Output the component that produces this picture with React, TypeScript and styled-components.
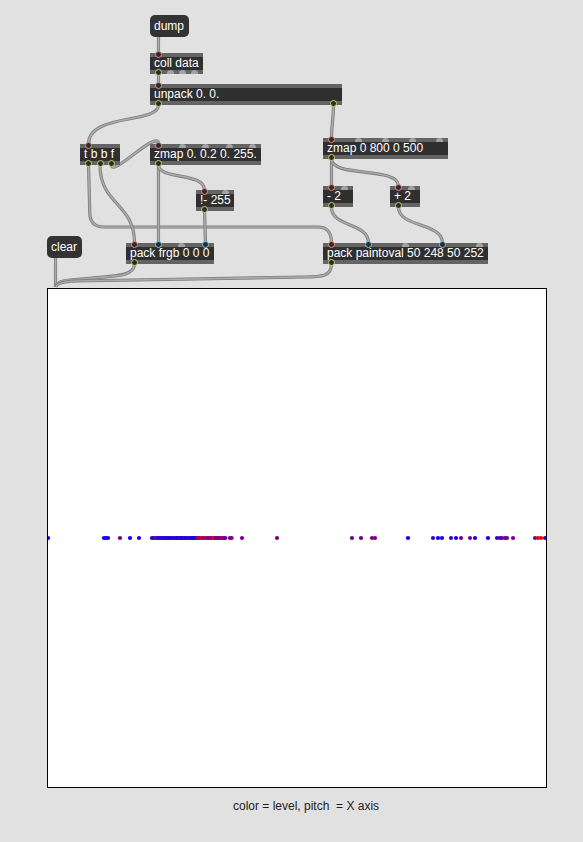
import React from 'react';
import styled, { createGlobalStyle, css } from 'styled-components';

const GlobalStyle = createGlobalStyle`
  html, body { margin: 0; padding: 0; background: #e1e1e1; }
  body { font-family: "Liberation Sans", Arial, sans-serif; }
`;

type PortKind = 'hot' | 'cold' | 'out' | 'idle';
type Edge = 'top' | 'bottom';

interface Obj {
  text: string;
  x: number;
  y: number;
  w: number;
  ins: PortKind[];
  outs: PortKind[];
}

const objects: Obj[] = [
  { text: 'coll data', x: 150, y: 53, w: 53, ins: ['hot'], outs: ['out', 'idle', 'idle', 'idle'] },
  { text: 'unpack 0. 0.', x: 150, y: 84, w: 192, ins: ['hot'], outs: ['out', 'out'] },
  { text: 't b b f', x: 80, y: 144, w: 40, ins: ['hot'], outs: ['out', 'out', 'out'] },
  { text: 'zmap 0. 0.2 0. 255.', x: 150, y: 144, w: 111, ins: ['hot', 'idle', 'idle', 'idle', 'idle'], outs: ['out'] },
  { text: 'zmap 0 800 0 500', x: 323, y: 138, w: 125, ins: ['hot', 'idle', 'idle', 'idle', 'idle'], outs: ['out'] },
  { text: '- 2', x: 323, y: 186, w: 30, ins: ['hot', 'idle'], outs: ['out'] },
  { text: '+ 2', x: 390, y: 186, w: 30, ins: ['hot', 'idle'], outs: ['out'] },
  { text: '!- 255', x: 196, y: 190, w: 38, ins: ['hot', 'idle'], outs: ['out'] },
  { text: 'pack frgb 0 0 0', x: 126, y: 243, w: 88, ins: ['hot', 'cold', 'idle', 'cold'], outs: ['out'] },
  { text: 'pack paintoval 50 248 50 252', x: 323, y: 243, w: 165, ins: ['hot', 'cold', 'idle', 'cold', 'idle'], outs: ['out'] },
];

const messages = [
  { text: 'dump', x: 150, y: 15, w: 39 },
  { text: 'clear', x: 47, y: 236, w: 35 },
];

const cords: string[] = [
  'M158.5 37 L158.5 53',
  'M158.5 74 L158.5 84',
  'M158.5 105 C158.5 124, 88.5 113, 88.5 144',
  'M333.5 105 C333.5 120, 331.5 123, 331.5 138',
  'M111.5 165 C111.5 178, 158.5 128, 158.5 144',
  'M88.5 165 L89.8 213 Q90 227 104 227 L318 227 Q331.5 227 331.5 243',
  'M100 165 C100 205, 134.5 203, 134.5 243',
  'M158.5 165 L158.5 243',
  'M158.5 165 C158.5 180, 204.5 172, 204.5 190',
  'M204.5 211 L205.5 243',
  'M55.5 258 L55.5 287',
  'M134.5 264 C134.5 276, 116 276, 92 278 L70 280 Q56 281 56 287',
  'M331.5 264 C331.5 276, 322 277, 305 277 L76 281 Q57 282 56 287',
  'M331.5 159 L331.5 186',
  'M331.5 159 C331.5 178, 398.5 166, 398.5 186',
  'M331.5 207 C331.5 228, 368.5 222, 368.5 243',
  'M398.5 207 C398.5 228, 442.5 222, 442.5 243',
];

// dots: [absolute x, red level 0-255]
const singles: [number, number][] = [
  [48, 0], [104, 20], [106, 25], [108, 15], [120, 125], [130, 10], [139, 30],
  [242, 115], [277, 125], [352, 115], [361, 110], [372, 120], [375, 125],
  [408, 10], [433, 45], [438, 20], [442, 25], [451, 55], [456, 20], [461, 115],
  [470, 115], [475, 20], [488, 15], [497, 50], [500, 45], [502, 110], [505, 115],
  [507, 110], [513, 115], [535, 120], [538, 235], [541, 240], [545, 60],
];

function makeDots(): [number, number][] {
  let s = 12345;
  const rnd = () => {
    s = (s * 1103515245 + 12345) & 0x7fffffff;
    return s / 0x7fffffff;
  };
  const out: [number, number][] = [];
  for (let x = 152; x <= 232; x += 0.9 + rnd() * 1.3) {
    if (x > 226.5 && x < 229) continue;
    let red: number;
    if (x < 197) red = rnd() < 0.2 ? 90 + rnd() * 30 : 10 + rnd() * 60;
    else if (x < 212) red = 110 + rnd() * 90;
    else if (x < 215) red = 250;
    else red = 100 + rnd() * 45;
    out.push([x, Math.round(red)]);
  }
  return [...singles, ...out];
}

const dots = makeDots();

const Patcher = styled.div`
  width: 583px;
  height: 842px;
  background: #e1e1e1;
  overflow: hidden;
  display: flex;
  flex-direction: column;
`;

/* free canvas on which the patch objects are placed */
const NodeCanvas = styled.div`
  position: relative;
  flex: none;
  height: 288px;
`;

const CordLayer = styled.svg`
  position: absolute;
  left: 0;
  top: 0;
  width: 583px;
  height: 288px;
  pointer-events: none;
  z-index: 1;
`;

const Node = styled.div<{ $x: number; $y: number; $w: number }>`
  position: absolute;
  left: ${(p) => p.$x}px;
  top: ${(p) => p.$y}px;
  width: ${(p) => p.$w}px;
  z-index: 2;
`;

const MaxObject = styled(Node)`
  height: 21px;
  display: flex;
  flex-direction: column;
  background: #2f2f2f;
`;

const Strip = styled.div`
  height: 4px;
  flex: none;
  background: #646464;
  display: flex;
  justify-content: space-between;
  align-items: flex-start;
  padding: 0 5px;
`;

const portColor: Record<PortKind, string> = {
  hot: '#e98a7f',
  cold: '#6ccad9',
  out: '#c9d160',
  idle: '#a4a4a4',
};

const Port = styled.span<{ $kind: PortKind; $edge: Edge }>`
  flex: none;
  width: 7px;
  box-sizing: border-box;
  ${(p) =>
    p.$kind === 'idle'
      ? css`
          height: 4px;
          border-radius: 3.5px 3.5px 0 0;
          background: ${portColor.idle};
        `
      : css`
          height: 7px;
          border-radius: 50%;
          background: #2c2c2c;
          border: 1.5px solid ${portColor[p.$kind]};
          margin-top: ${p.$edge === 'top' ? -2.5 : -1}px;
        `}
`;

const Label = styled.div`
  height: 13px;
  flex: none;
  line-height: 13px;
  padding: 0 4px;
  font-size: 12px;
  color: #ffffff;
  white-space: nowrap;
  overflow: hidden;
`;

const MessageBox = styled(Node)`
  height: 22px;
  box-sizing: border-box;
  padding: 4px 4px 0 4px;
  border-radius: 5px;
  background: #333333;
  color: #ffffff;
  font-size: 12px;
  line-height: 14px;
  white-space: nowrap;
`;

const LcdRow = styled.div`
  display: flex;
  padding-left: 47px;
`;

const Lcd = styled.div`
  width: 500px;
  height: 500px;
  box-sizing: border-box;
  border: 1px solid #000;
  background: #ffffff;
  overflow: hidden;
`;

const LcdDrawing = styled.svg`
  display: block;
  width: 498px;
  height: 498px;
`;

const Caption = styled.div`
  margin: 11px 0 0 233px;
  font-size: 12px;
  line-height: 14px;
  color: #1e1e1e;
  white-space: pre;
`;

const PortStrip: React.FC<{ kinds: PortKind[]; edge: Edge }> = ({ kinds, edge }) => (
  <Strip>
    {kinds.map((k, i) => (
      <Port key={i} $kind={k} $edge={edge} />
    ))}
  </Strip>
);

export default function App() {
  return (
    <>
      <GlobalStyle />
      <Patcher>
        <NodeCanvas>
          <CordLayer viewBox="0 0 583 288">
            {cords.map((d, i) => (
              <g key={i} fill="none" strokeLinecap="butt" strokeLinejoin="round">
                <path d={d} stroke="#7c7c7c" strokeWidth={3.2} />
                <path d={d} stroke="#ababab" strokeWidth={1.6} />
              </g>
            ))}
          </CordLayer>

          {messages.map((m) => (
            <MessageBox key={m.text} $x={m.x} $y={m.y} $w={m.w}>
              {m.text}
            </MessageBox>
          ))}

          {objects.map((o) => (
            <MaxObject key={o.text} $x={o.x} $y={o.y} $w={o.w}>
              <PortStrip kinds={o.ins} edge="top" />
              <Label>{o.text}</Label>
              <PortStrip kinds={o.outs} edge="bottom" />
            </MaxObject>
          ))}
        </NodeCanvas>

        <LcdRow>
          <Lcd>
            <LcdDrawing viewBox="0 0 498 498">
              {dots.map(([x, r], i) => (
                <circle key={i} cx={x - 48} cy={249} r={2.1} fill={`rgb(${r},0,${255 - r})`} />
              ))}
            </LcdDrawing>
          </Lcd>
        </LcdRow>

        <Caption>{'color = level, pitch  = X axis'}</Caption>
      </Patcher>
    </>
  );
}
